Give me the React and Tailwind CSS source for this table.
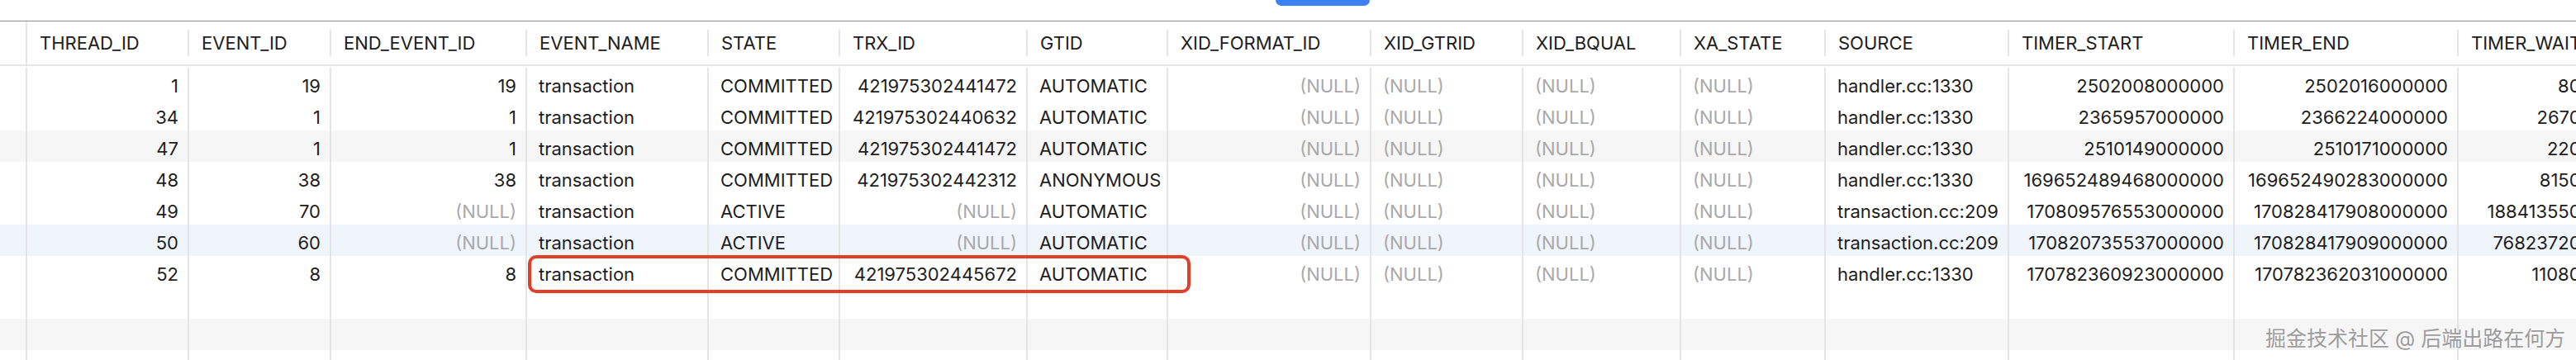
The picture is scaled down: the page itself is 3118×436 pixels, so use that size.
import React from "react";

const COLS = [
  { key: "THREAD_ID", w: "w-[196px]", right: true },
  { key: "EVENT_ID", w: "w-[172px]", right: true },
  { key: "END_EVENT_ID", w: "w-[237px]", right: true },
  { key: "EVENT_NAME", w: "w-[220px]" },
  { key: "STATE", w: "w-[159px]" },
  { key: "TRX_ID", w: "w-[227px]", right: true },
  { key: "GTID", w: "w-[170px]" },
  { key: "XID_FORMAT_ID", w: "w-[246px]", right: true },
  { key: "XID_GTRID", w: "w-[184px]" },
  { key: "XID_BQUAL", w: "w-[191px]" },
  { key: "XA_STATE", w: "w-[175px]" },
  { key: "SOURCE", w: "w-[222px]" },
  { key: "TIMER_START", w: "w-[273px]", right: true },
  { key: "TIMER_END", w: "w-[271px]", right: true },
  { key: "TIMER_WAIT", w: "w-[230px]", right: true },
];

const ROWS = [
  ["1", "19", "19", "transaction", "COMMITTED", "421975302441472", "AUTOMATIC", null, null, null, null, "handler.cc:1330", "2502008000000", "2502016000000", "8000000"],
  ["34", "1", "1", "transaction", "COMMITTED", "421975302440632", "AUTOMATIC", null, null, null, null, "handler.cc:1330", "2365957000000", "2366224000000", "267000000"],
  ["47", "1", "1", "transaction", "COMMITTED", "421975302441472", "AUTOMATIC", null, null, null, null, "handler.cc:1330", "2510149000000", "2510171000000", "22000000"],
  ["48", "38", "38", "transaction", "COMMITTED", "421975302442312", "ANONYMOUS", null, null, null, null, "handler.cc:1330", "169652489468000000", "169652490283000000", "815000000"],
  ["49", "70", null, "transaction", "ACTIVE", null, "AUTOMATIC", null, null, null, null, "transaction.cc:209", "170809576553000000", "170828417908000000", "18841355000000"],
  ["50", "60", null, "transaction", "ACTIVE", null, "AUTOMATIC", null, null, null, null, "transaction.cc:209", "170820735537000000", "170828417909000000", "7682372000000"],
  ["52", "8", "8", "transaction", "COMMITTED", "421975302445672", "AUTOMATIC", null, null, null, null, "handler.cc:1330", "170782360923000000", "170782362031000000", "1108000000"],
  null,
  null,
  null,
];

// every third row is shaded, the 6th is the selected one
function rowBg(i) {
  if (i === 5) return "bg-[#eff5fb]";
  if (i === 2 || i === 8) return "bg-[#f6f6f6]";
  return "bg-white";
}

function HeaderCell({ col }) {
  return (
    <div className={`${col.w} flex-none flex items-center justify-between`}>
      <span className="pl-[15px] whitespace-nowrap">{col.key}</span>
      <div className="w-[2px] h-[32px] bg-[#e4e4e4]" />
    </div>
  );
}

function Cell({ col, value, empty }) {
  const isNull = !empty && value === null;
  return (
    <div
      className={`${col.w} flex-none h-full border-r-2 border-[#e4e4e4] flex items-center pt-[7px] whitespace-nowrap ${
        col.right ? "justify-end pr-[11px]" : "justify-start pl-[14px]"
      } ${isNull ? "text-[#a9a9a9]" : "text-[#1e1e1e]"}`}
    >
      {empty ? "" : isNull ? "(NULL)" : value}
    </div>
  );
}

export default function App() {
  return (
    <div className="relative w-full h-[436px] overflow-hidden bg-white font-[Inter,'Noto_Sans_CJK_SC',sans-serif] text-[22px]">
      {/* top strip with the edge of a tab button */}
      <div className="h-[25px] w-[3206px]">
        <div className="ml-[1544px] w-[114px] h-[7px] bg-[#3d80f4] rounded-b-[7px]" />
      </div>
      <div className="h-px w-[3206px] bg-[#8d8d8d]" />

      {/* header */}
      <div className="flex w-max h-[54px] border-b-2 border-[#e7e7e7] text-[#202020]">
        <div className="w-[33px] flex-none border-r-2 border-[#e4e4e4]" />
        {COLS.map((c) => (
          <HeaderCell key={c.key} col={c} />
        ))}
      </div>

      {/* body */}
      <div className="pt-[2px] w-max">
        {ROWS.map((r, i) => (
          <div key={i} className={`flex h-[38px] ${rowBg(i)}`}>
            <div className="w-[33px] flex-none h-full border-r-2 border-[#e4e4e4]" />
            {COLS.map((c, j) => (
              <Cell key={c.key} col={c} value={r ? r[j] : ""} empty={!r} />
            ))}
          </div>
        ))}
      </div>

      {/* red highlight around the last transaction */}
      <div className="absolute left-[639px] top-[309px] w-[802px] h-[46px] border-4 border-[#e23f28] rounded-[10px]" />

      {/* watermark */}
      <div className="absolute left-[2742px] top-[392px] text-[25px] text-[#9c9c9c] whitespace-nowrap [text-shadow:0_0_2px_#ffffff]">
        掘金技术社区 @ 后端出路在何方
      </div>
    </div>
  );
}
